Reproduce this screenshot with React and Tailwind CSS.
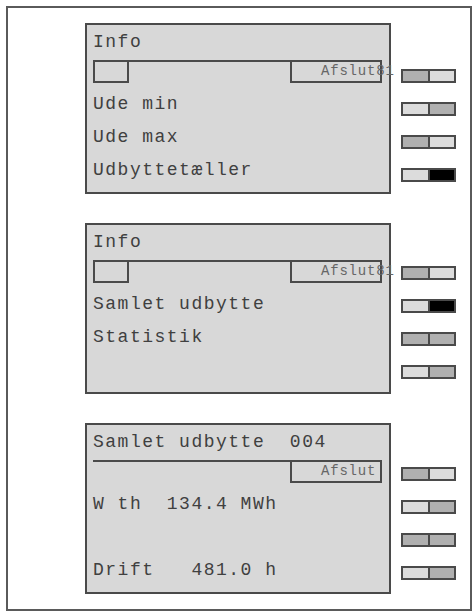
const mono = "font-['Liberation_Mono','DejaVu_Sans_Mono',monospace]"

const DARK = 'bg-[#b0b0b0]'
const LIGHT = 'bg-[#dcdcdc]'
const BLACK = 'bg-black'

const SCREENS = [
  {
    title: 'Info',
    leftBox: true,
    exit: 'Afslut81',
    rows: ['Ude min', 'Ude max', 'Udbyttetæller'],
    keysTop: 'pt-[46px]',
    keys: [[DARK, LIGHT], [LIGHT, DARK], [DARK, LIGHT], [LIGHT, BLACK]],
  },
  {
    title: 'Info',
    leftBox: true,
    exit: 'Afslut81',
    rows: ['Samlet udbytte', 'Statistik'],
    keysTop: 'pt-[43px]',
    keys: [[DARK, LIGHT], [LIGHT, BLACK], [DARK, DARK], [LIGHT, DARK]],
  },
  {
    title: 'Samlet udbytte  004',
    leftBox: false,
    exit: 'Afslut',
    rows: ['W th  134.4 MWh', '', 'Drift   481.0 h'],
    keysTop: 'pt-[44px]',
    keys: [[DARK, LIGHT], [LIGHT, DARK], [DARK, DARK], [LIGHT, DARK]],
  },
]

export default function App() {
  return (
    <div className="w-[473px] h-[612px] bg-white">
      <div className="ml-[6px] mt-[6px] w-[466px] h-[605px] border-2 border-[#5a5a5a] pl-[77px] pt-[15px] flex flex-col gap-[29px]">
        {SCREENS.map((s, i) => (
          <Section key={i} screen={s} />
        ))}
      </div>
    </div>
  )
}

function Section({ screen }) {
  return (
    <div className="flex items-start gap-[10px]">
      <Display screen={screen} />
      <div className={`flex flex-col gap-[19px] ${screen.keysTop}`}>
        {screen.keys.map(([a, b], i) => (
          <SoftKey key={i} left={a} right={b} />
        ))}
      </div>
    </div>
  )
}

function Display({ screen }) {
  return (
    <div className={`w-[306px] h-[171px] border-2 border-[#4a4a4a] bg-[#d8d8d8] pl-[6px] pr-[7px] pt-[5px] text-[18px] tracking-[1.5px] text-[#404040] whitespace-pre ${mono}`}>
      <p className="leading-[24px]">{screen.title}</p>

      {/* menu bar with exit key */}
      <div className="mt-[6px] h-[23px] flex">
        {screen.leftBox && <div className="w-[36px] h-full border-2 border-[#4a4a4a]" />}
        <div className="flex-1 border-t-2 border-[#4a4a4a]" />
        <div className="w-[92px] h-full border-2 border-[#4a4a4a] pl-[29px] pt-[2px]">
          <span className="block text-[14px] leading-[14px] tracking-[0.8px] text-[#666] whitespace-nowrap">
            {screen.exit}
          </span>
        </div>
      </div>

      <div className="mt-[5px] flex flex-col">
        {screen.rows.map((r, i) => (
          <p key={i} className="leading-[33px] h-[33px]">{r}</p>
        ))}
      </div>
    </div>
  )
}

function SoftKey({ left, right }) {
  return (
    <div className="w-[55px] h-[14px] border-2 border-[#4a4a4a] flex">
      <div className={`flex-1 ${left}`} />
      <div className="w-[2px] bg-[#4a4a4a]" />
      <div className={`flex-1 ${right}`} />
    </div>
  )
}
